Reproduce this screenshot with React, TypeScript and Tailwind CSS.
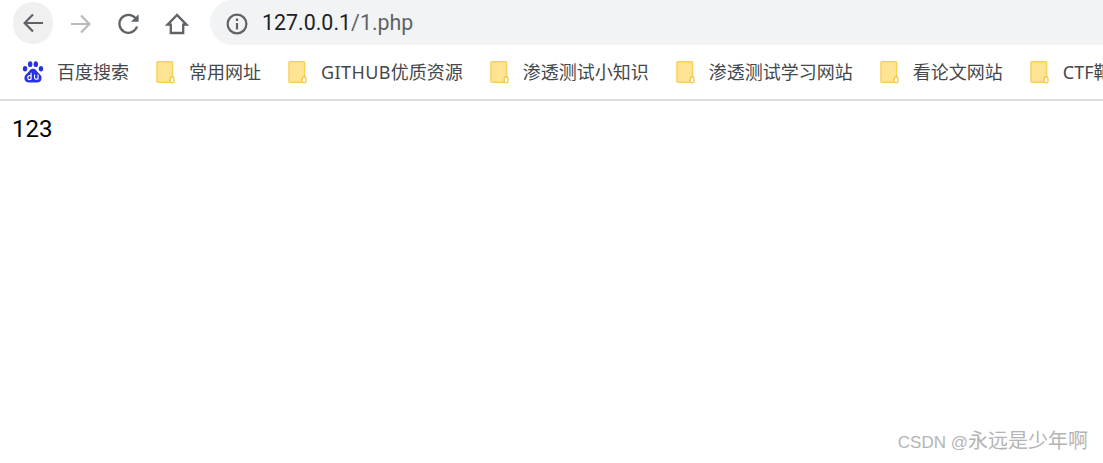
const sans = "font-['Roboto','Noto_Sans_CJK_SC',sans-serif]";
const bar = "font-['Noto_Sans','Noto_Sans_CJK_SC',sans-serif]";

function Folder() {
  return (
    <svg width="19" height="23" viewBox="0 0 19 23" className="shrink-0">
      <path d="M1 1.7a1 1 0 0 1 1-1h13.6a1 1 0 0 1 1 1v19.6H2a1 1 0 0 1-1-1z" fill="#ffe593" stroke="#f7d157" strokeWidth="1.5" />
      <rect x="14.2" y="16" width="3.8" height="5.8" rx="1.5" fill="#fff" stroke="#f3c53f" strokeWidth="1.3" />
    </svg>
  );
}

function BaiduPaw() {
  return (
    <svg width="22" height="22" viewBox="0 0 21 21" className="shrink-0">
      <g fill="#2932e1">
        <ellipse cx="2.9" cy="7.4" rx="2.1" ry="2.6" />
        <ellipse cx="7.8" cy="3" rx="2.1" ry="2.8" />
        <ellipse cx="13.2" cy="3" rx="2.1" ry="2.8" />
        <ellipse cx="18.1" cy="7.4" rx="2.1" ry="2.6" />
        <path d="M10.5 7.5c2.8 0 3.4 2.4 5 3.7 1.9 1.5 3.2 3 3.2 5.2 0 2.7-2.2 4.1-4.5 4.1H6.8c-2.3 0-4.5-1.4-4.5-4.1 0-2.2 1.3-3.7 3.2-5.2 1.6-1.3 2.2-3.7 5-3.7z" />
      </g>
      <path d="M8.7 11.2v6.3M8.7 14.6a1.9 1.9 0 1 0 0 2.6M8.7 14.6v2.6M12 13v3c0 2 3 2 3.3 0v-3M15.3 13v4.6" fill="none" stroke="#fff" strokeWidth="1.1" />
    </svg>
  );
}

const bookmarks = [
  "常用网址",
  <><span className="tracking-[0.4px]">GITHUB</span>优质资源</>,
  "渗透测试小知识",
  "渗透测试学习网站",
  "看论文网站",
  "CTF靶场",
];

export default function App() {
  return (
    <div className={`relative w-[1103px] h-[463px] overflow-hidden bg-white ${sans}`}>
      <div className="flex h-[45px] pl-[13px]">
        <div className="flex items-center justify-center w-10 h-[42px] mt-[2px] rounded-full bg-[#f0f0f0]">
          <svg width="24" height="24" viewBox="0 0 24 24" fill="none" stroke="#5f6368" strokeWidth="2.2">
            <path d="M22 12H3M12 3.5 3.6 12l8.4 8.5" />
          </svg>
        </div>
        <div className="flex items-center justify-center w-12 ml-1 mt-[2px]">
          <svg width="24" height="24" viewBox="0 0 24 24" fill="none" stroke="#b7b9bb" strokeWidth="2.2">
            <path d="M2 12h19M12 3.5l8.4 8.5-8.4 8.5" />
          </svg>
        </div>
        <div className="flex items-center justify-center w-12 mt-[2px]">
          <svg width="24" height="24" viewBox="0 0 24 24" fill="none" stroke="#5f6368" strokeWidth="2.3">
            <path d="M20 14.5a9 9 0 1 1-1.6-8.4" />
            <path d="M21.6 2.2v7.6H14z" fill="#5f6368" stroke="none" />
          </svg>
        </div>
        <div className="flex items-center justify-center w-12 mt-[2px]">
          <svg width="24" height="24" viewBox="0 0 24 24" fill="none" stroke="#5f6368" strokeWidth="2.3">
            <path d="M12 3 2.6 12.6h3.2V21h12.4v-8.4h3.2z" />
          </svg>
        </div>
        <div className="flex items-center flex-1 h-[45px] ml-[9px] pl-[15px] rounded-l-[23px] bg-[#f1f3f4]">
          <svg width="24" height="24" viewBox="0 0 24 24" fill="none" stroke="#5f6368" strokeWidth="2.2" className="mt-[2px]">
            <circle cx="12" cy="12" r="9.4" />
            <path d="M12 11v6.5M12 6.5v2.4" />
          </svg>
          <span className="ml-[13px] text-[21.4px] leading-none text-[#202124]">
            127.0.0.1<span className="text-[#5f6368]">/1.php</span>
          </span>
        </div>
      </div>
      <div className={`flex items-center h-[54px] pl-[22px] gap-[27px] border-b-2 border-[#dedede] box-content whitespace-nowrap text-[18px] text-[#45484b] ${bar}`}>
        <div className="flex items-center gap-[13px]">
          <BaiduPaw />
          <span>百度搜索</span>
        </div>
        {bookmarks.map((b, i) => (
          <div key={i} className="flex items-center gap-[14px]">
            <Folder />
            <span>{b}</span>
          </div>
        ))}
      </div>
      <p className="pl-[12px] pt-[12px] text-[24px] leading-8 text-black">123</p>
      <div className="absolute right-[15px] bottom-[8px] font-['Liberation_Sans','Noto_Sans_CJK_SC',sans-serif] text-[20px] leading-6 text-[#b4b4b4]">
        <span className="text-[17px]">CSDN @</span>永远是少年啊
      </div>
    </div>
  );
}
